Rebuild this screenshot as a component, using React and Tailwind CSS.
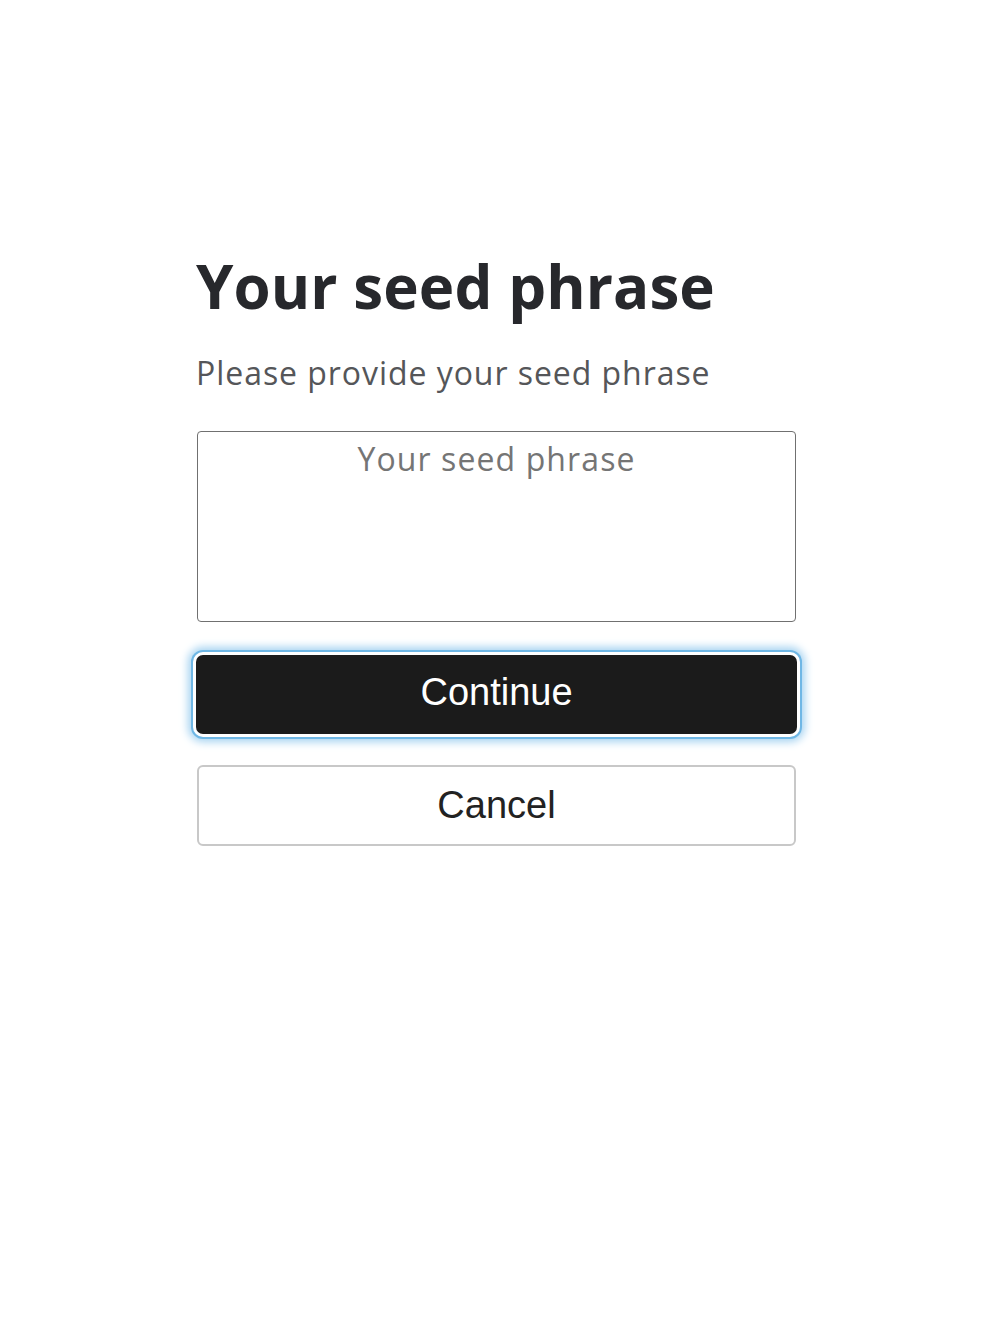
export default function App() {
  return (
    <div className="min-h-[1342px] bg-white pl-[196px] pt-[248px]">
      <div className="w-[600px] flex flex-col">
        <h1 className="text-[60px] leading-[76px] font-bold text-[#27282c] tracking-[0.1px] [font-family:'Open_Sans',sans-serif]">
          Your seed phrase
        </h1>
        <p className="mt-[28px] text-[32px] leading-[42px] text-[#555659] tracking-[0.95px] [font-family:'Open_Sans',sans-serif]">
          Please provide your seed phrase
        </p>
        <textarea
          placeholder="Your seed phrase"
          className="mt-[37px] ml-[1px] w-[599px] h-[191px] resize-none rounded-[4px] border-[1.5px] border-[#707070] px-3 pt-[4px] text-center text-[32px] leading-[46px] tracking-[1.1px] text-[#222] placeholder:text-[#757575] outline-none [font-family:'Open_Sans',sans-serif]"
        />
        <button className="mt-[33px] h-[79px] w-[601px] rounded-[7px] bg-[#1b1b1b] text-[38px] text-white shadow-[0_0_0_3px_#ffffff,0_0_0_5px_#6fb7e5,0_0_9px_8px_#a6d3f1] [font-family:'Liberation_Sans',Arial,sans-serif]">
          <span className="relative -top-[2px]">Continue</span>
        </button>
        <button className="mt-[31px] ml-[1px] h-[81px] w-[599px] rounded-[6px] border-2 border-[#c8c8c8] bg-white text-[38px] text-[#222] [font-family:'Liberation_Sans',Arial,sans-serif]">
          Cancel
        </button>
      </div>
    </div>
  );
}
